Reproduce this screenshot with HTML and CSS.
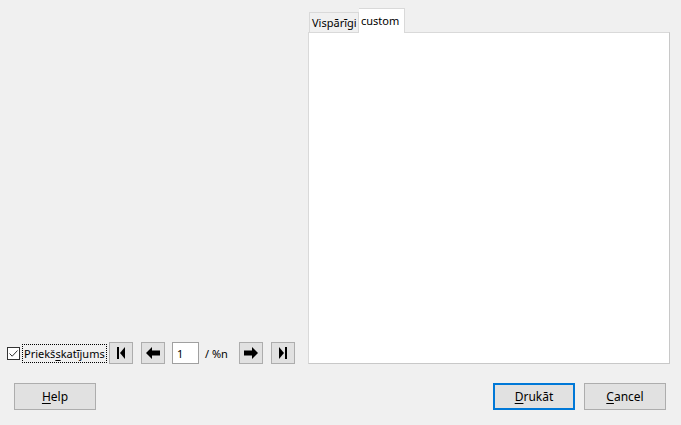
FILE: index.html
```html
<!DOCTYPE html>
<html>
<head>
<meta charset="utf-8">
<link rel="stylesheet" href="styles.css">
</head>
<body>
<div class="dialog">
  <div class="main">
    <div class="left">
      <div class="nav">
        <label class="check">
          <span class="box"><svg width="11" height="11" viewBox="0 0 11 11"><path d="M1.5 5.5 L4.2 8.2 L9.5 2.5" fill="none" stroke="#333" stroke-width="1"/></svg></span>
          <span class="focus">Priekš<u>s</u>katījums</span>
        </label>
        <button class="nb first"><svg width="12" height="14" viewBox="0 0 12 14"><rect x="2" y="1" width="2" height="12" fill="#000"/><path d="M10 1 L10 13 L5 7 Z" fill="#000"/></svg></button>
        <button class="nb prev"><svg width="16" height="14" viewBox="0 0 16 14"><path d="M1 7 L7 1 L7 4.5 L15 4.5 L15 9.5 L7 9.5 L7 13 Z" fill="#000"/></svg></button>
        <input class="page" type="text" value="1">
        <span class="of">/ %n</span>
        <button class="nb next"><svg width="16" height="14" viewBox="0 0 16 14"><path d="M15 7 L9 1 L9 4.5 L1 4.5 L1 9.5 L9 9.5 L9 13 Z" fill="#000"/></svg></button>
        <button class="nb last"><svg width="12" height="14" viewBox="0 0 12 14"><path d="M2 1 L2 13 L7 7 Z" fill="#000"/><rect x="8" y="1" width="2" height="12" fill="#000"/></svg></button>
      </div>
    </div>
    <div class="right">
      <div class="tabs">
        <div class="tab general">Vispārīgi</div>
        <div class="tab active">custom</div>
      </div>
      <div class="panel"></div>
    </div>
  </div>
  <div class="bottom">
    <button class="btn"><u>H</u>elp</button>
    <div class="spacer"></div>
    <button class="btn default"><u>D</u>rukāt</button>
    <button class="btn"><u>C</u>ancel</button>
  </div>
</div>
</body>
</html>
```

FILE: styles.css
```css
html, body {
  margin: 0;
  padding: 0;
  background: #f0f0f0;
}
body {
  font-family: "Noto Sans", "Segoe UI", sans-serif;
  font-size: 11px;
  color: #000;
}
.dialog {
  width: 681px;
  height: 425px;
  display: flex;
  flex-direction: column;
}
.main {
  display: flex;
  height: 364px;
  padding-top: 8px;
  box-sizing: border-box;
}
.left {
  width: 308px;
  display: flex;
  flex-direction: column;
  justify-content: flex-end;
}
.nav {
  display: flex;
  align-items: center;
  height: 22px;
  padding-left: 7px;
}
.check {
  display: flex;
  align-items: center;
}
.box {
  width: 11px;
  height: 11px;
  border: 1px solid #333;
  background: #fff;
  display: flex;
}
.focus {
  margin-left: 2px;
  width: 85px;
  border: 1px dotted #000;
  padding: 0 0 0 1px;
  height: 19px;
  box-sizing: border-box;
  display: flex;
  align-items: center;
  white-space: nowrap;
}
.nb {
  width: 24px;
  height: 22px;
  border: 1px solid #adadad;
  background: #e1e1e1;
  padding: 0;
  display: flex;
  align-items: center;
  justify-content: center;
  box-sizing: border-box;
}
.first { margin-left: 2px; }
.prev { margin-left: 8px; }
.page {
  margin-left: 7px;
  width: 27px;
  height: 22px;
  box-sizing: border-box;
  border: 1px solid #a0a0a0;
  background: #fff;
  font: inherit;
  padding: 0 0 0 4px;
}
.of {
  margin-left: 6px;
  width: 34px;
}
.last { margin-left: 8px; }
.right {
  width: 362px;
  display: flex;
  flex-direction: column;
}
.tabs {
  display: flex;
  align-items: flex-end;
  height: 24px;
  padding-left: 1px;
}
.tab {
  height: 20px;
  box-sizing: border-box;
  border: 1px solid #d9d9d9;
  border-bottom: none;
  padding: 0 0 0 2px;
  line-height: 19px;
  background: #f0f0f0;
  white-space: nowrap;
}
.tab.general { width: 50px; }
.tab.active {
  width: 46px;
  height: 25px;
  margin-bottom: -1px;
  background: #fff;
  border-left: none;
  padding-top: 2px;
  position: relative;
  z-index: 1;
}
.panel {
  flex: 1;
  background: #fff;
  border: 1px solid #d9d9d9;
  border-right-color: #c8c8c8;
  border-bottom-color: #c8c8c8;
}
.bottom {
  display: flex;
  align-items: center;
  padding: 19px 15px 0 14px;
}
.spacer { flex: 1; }
.btn {
  width: 82px;
  height: 27px;
  border: 1px solid #adadad;
  background: #e1e1e1;
  font: inherit;
  font-size: 12px;
  color: #000;
  padding: 0;
  box-sizing: border-box;
}
.btn.default {
  border: 2px solid #0078d7;
  margin-right: 9px;
}
u { text-decoration: underline; text-underline-offset: 2px; }
```
